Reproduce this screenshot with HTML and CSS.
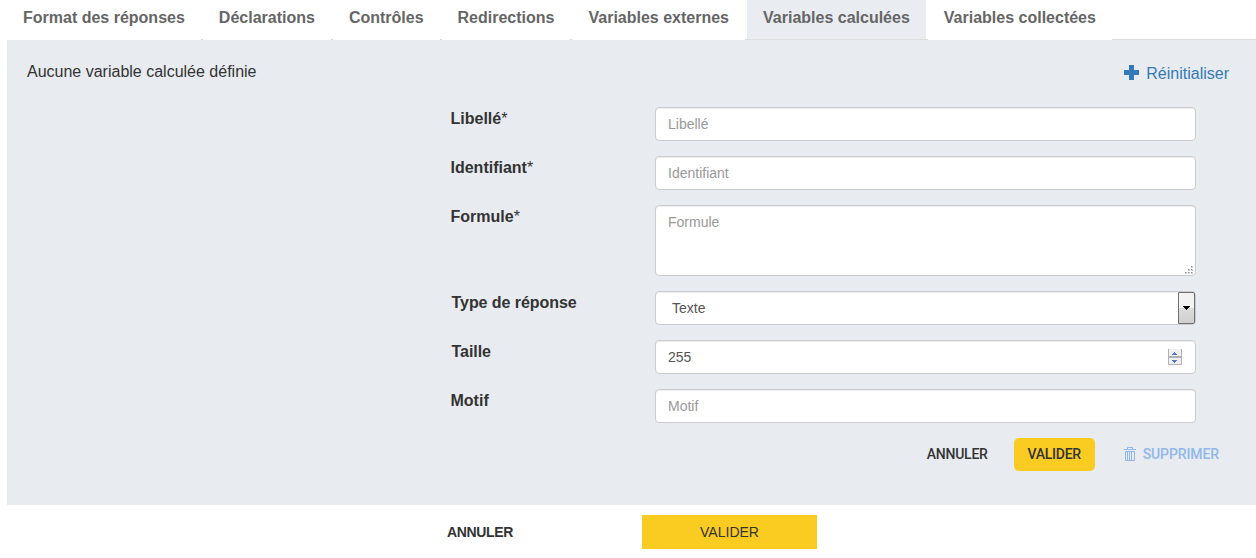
FILE: index.html
```html
<!DOCTYPE html>
<html lang="fr">
<head>
<meta charset="utf-8">
<title>Variables calculées</title>
<link rel="stylesheet" href="styles.css">
</head>
<body>
<nav class="tabs">
<a class="tab">Format des réponses</a>
<a class="tab">Déclarations</a>
<a class="tab">Contrôles</a>
<a class="tab">Redirections</a>
<a class="tab">Variables externes</a>
<a class="tab active">Variables calculées</a>
<a class="tab">Variables collectées</a>
</nav>
<main class="panel">
<header class="panel-head">
<span class="empty">Aucune variable calculée définie</span>
<a class="reset"><svg width="15" height="15" viewBox="0 0 15 15" shape-rendering="crispEdges"><path d="M5 0h5v5h5v5h-5v5H5v-5H0V5h5z" fill="#337ab7"/></svg><span>Réinitialiser</span></a>
</header>
<form class="form">
<label class="label">Libellé<sup>*</sup></label>
<input class="control" placeholder="Libellé">
<label class="label">Identifiant<sup>*</sup></label>
<input class="control" placeholder="Identifiant">
<label class="label">Formule<sup>*</sup></label>
<div class="field">
<textarea class="control area" placeholder="Formule"></textarea>
<svg class="grip" width="8" height="8" viewBox="0 0 8 8" shape-rendering="crispEdges"><path d="M6 0h1v1H6zM3 3h1v1H3zM6 3h1v1H6zM0 6h1v1H0zM3 6h1v1H3zM6 6h1v1H6z" fill="#888"/><path d="M7 0h1v2H6V1h1zM4 3h1v2H3V4h1zM7 3h1v2H6V4h1zM1 6h1v2H0V7h1zM4 6h1v2H3V7h1zM7 6h1v2H6V7h1z" fill="#ccc"/></svg>
</div>
<label class="label shifted">Type de réponse</label>
<div class="control select"><span>Texte</span><span class="drop"><svg width="7" height="4" viewBox="0 0 7 4" shape-rendering="crispEdges"><path d="M0 0h7v1H6v1H5v1H4v1H3V3H2V2H1V1H0z"/></svg></span></div>
<label class="label shifted">Taille</label>
<div class="control number"><span>255</span>
<svg width="14" height="16" viewBox="0 0 14 16" shape-rendering="crispEdges"><path d="M0 0h14v16H0z" fill="#b1b1b8"/><path d="M1 0h12v7H1zM1 9h12v6H1z" fill="#f0f0f0"/><path d="M6 3h1v1h1v1h1v1H4V5h1V4h1zM4 11h5v1H8v1H7v1H6v-1H5v-1H4z" fill="#5876ce"/></svg>
</div>
<label class="label">Motif</label>
<input class="control" placeholder="Motif">
</form>
<div class="actions">
<a class="btn">ANNULER</a>
<a class="btn primary">VALIDER</a>
<a class="btn delete"><svg width="12" height="14" viewBox="0 0 12 14" fill="none" stroke="#91b8ec"><path d="M0 2.5h12M3.5 2V.5h5V2" /><path d="M1.5 4.5h9v9h-9zM3.5 5v8M5.5 5v8M7.5 5v8"/></svg><span>SUPPRIMER</span></a>
</div>
</main>
<footer class="footer">
<a class="cancel">ANNULER</a>
<a class="submit">VALIDER</a>
</footer>
</body>
</html>
```
FILE: styles.css
```css
* { box-sizing: border-box; }
body {
  margin: 0;
  padding-left: 7px;
  height: 558px;
  overflow: hidden;
  background: #fff;
  color: #333;
  font: 16px/23px "Liberation Sans", Arial, sans-serif;
}
.tabs {
  display: flex;
  align-items: stretch;
  gap: 2px;
  height: 40px;
  background: linear-gradient(#ddd, #ddd) bottom / 100% 1px no-repeat;
}
.tab {
  padding: 6px 16px 0;
  background: #fff;
  color: #666;
  font-weight: bold;
  white-space: nowrap;
}
.tab.active {
  height: 39px;
  background: #e9edf2;
}
.panel {
  height: 465px;
  padding: 20px 27px 0 20px;
  background: #e8ebf0;
}
.panel-head {
  display: flex;
  justify-content: space-between;
  height: 47px;
}
.reset {
  display: flex;
  align-items: flex-start;
  gap: 7px;
  padding-top: 2px;
  color: #337ab7;
}
.reset svg { margin-top: 3px; }
.form {
  display: grid;
  grid-template-columns: 205px 541px;
  grid-template-rows: 34px 34px 71px 34px 34px 34px;
  row-gap: 15px;
  margin-left: 423px;
}
.label {
  padding-left: .5px;
  font-weight: bold;
}
.label.shifted {
  padding-left: 1.5px;
  letter-spacing: -.05px;
}
.label sup {
  font-size: 16px;
  font-weight: normal;
  line-height: 0;
  vertical-align: 0;
}
.control {
  display: block;
  width: 100%;
  height: 34px;
  margin: 0;
  padding: 6px 12px;
  border: 1px solid #ccc;
  border-radius: 4px;
  background: #fff;
  box-shadow: inset 0 1px 1px rgba(0, 0, 0, .075);
  color: #555;
  font: 14px/20px "Liberation Sans", Arial, sans-serif;
}
.control::placeholder { color: #999; opacity: 1; }
.field { position: relative; }
.area {
  height: 71px;
  resize: none;
}
.grip {
  position: absolute;
  right: 3px;
  bottom: 2px;
}
.select {
  display: flex;
  justify-content: space-between;
  padding: 0 0 0 16px;
  line-height: 32px;
}
.drop {
  display: flex;
  align-items: center;
  justify-content: center;
  width: 17px;
  border: 1px solid #707070;
  border-radius: 0 2px 2px 0;
  background: linear-gradient(#f3f3f3 50%, #dcdcdc 50%, #cfcfcf);
}
.number {
  display: flex;
  align-items: center;
  justify-content: space-between;
  padding-right: 13px;
}
.actions {
  display: flex;
  justify-content: flex-end;
  margin-top: 15px;
  padding-right: 10px;
}
.btn {
  display: flex;
  align-items: center;
  height: 33px;
  padding-bottom: 1px;
  font: 500 14px/20px Roboto, sans-serif;
  letter-spacing: -.25px;
}
.primary {
  justify-content: center;
  width: 81px;
  margin: 0 29px 0 26px;
  border-radius: 5px;
  background: #facb21;
}
.delete {
  gap: 7px;
  color: #91b8ec;
  letter-spacing: -.1px;
}
.delete svg { margin-bottom: 1px; }
.footer {
  display: flex;
  padding: 10px 0 0 440px;
  font-size: 14px;
  line-height: 34px;
}
.cancel {
  width: 195px;
  font-weight: bold;
  letter-spacing: -.35px;
}
.submit {
  width: 175px;
  background: #facb21;
  text-align: center;
}
```
